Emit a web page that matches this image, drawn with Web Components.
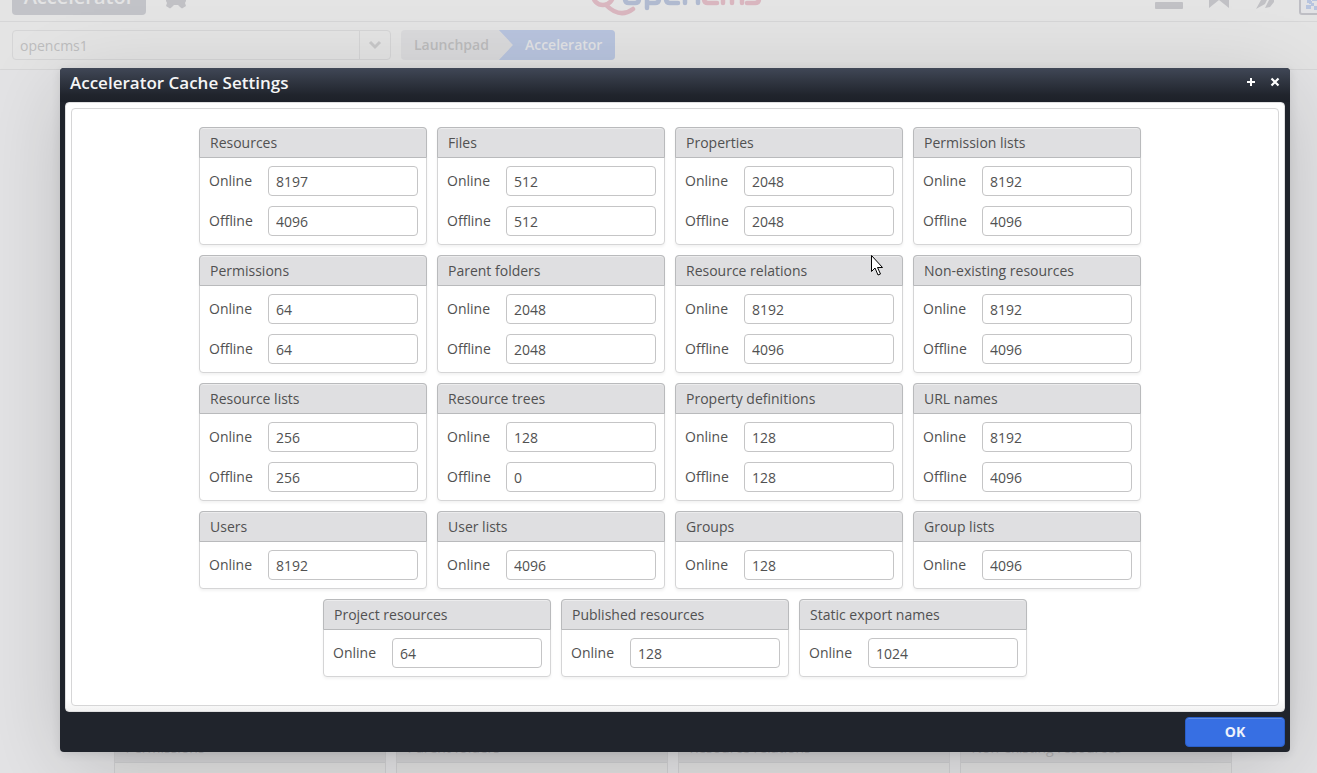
<!DOCTYPE html>
<html lang="en">
<head>
<meta charset="utf-8">
<title>Accelerator Cache Settings</title>
<style>
html, body { height: 100%; }
body { margin: 0; overflow: hidden; background: #e3e3e5; font: 14px/20px "Open Sans", sans-serif; color: #565656; }
</style>
</head>
<body>
<cms-app>
  <cms-header slot="header"></cms-header>
  <cms-toolbar slot="toolbar"></cms-toolbar>
  <cms-tile label="Permissions"></cms-tile>
  <cms-tile label="Parent folders"></cms-tile>
  <cms-tile label="Resource relations"></cms-tile>
  <cms-tile label="Non-existing resources"></cms-tile>
</cms-app>
<cms-dialog label="Accelerator Cache Settings">
  <cache-card label="Resources"><cache-field label="Online" value="8197"></cache-field><cache-field label="Offline" value="4096"></cache-field></cache-card>
  <cache-card label="Files"><cache-field label="Online" value="512"></cache-field><cache-field label="Offline" value="512"></cache-field></cache-card>
  <cache-card label="Properties"><cache-field label="Online" value="2048"></cache-field><cache-field label="Offline" value="2048"></cache-field></cache-card>
  <cache-card label="Permission lists"><cache-field label="Online" value="8192"></cache-field><cache-field label="Offline" value="4096"></cache-field></cache-card>
  <cache-card label="Permissions"><cache-field label="Online" value="64"></cache-field><cache-field label="Offline" value="64"></cache-field></cache-card>
  <cache-card label="Parent folders"><cache-field label="Online" value="2048"></cache-field><cache-field label="Offline" value="2048"></cache-field></cache-card>
  <cache-card label="Resource relations"><cache-field label="Online" value="8192"></cache-field><cache-field label="Offline" value="4096"></cache-field></cache-card>
  <cache-card label="Non-existing resources"><cache-field label="Online" value="8192"></cache-field><cache-field label="Offline" value="4096"></cache-field></cache-card>
  <cache-card label="Resource lists"><cache-field label="Online" value="256"></cache-field><cache-field label="Offline" value="256"></cache-field></cache-card>
  <cache-card label="Resource trees"><cache-field label="Online" value="128"></cache-field><cache-field label="Offline" value="0"></cache-field></cache-card>
  <cache-card label="Property definitions"><cache-field label="Online" value="128"></cache-field><cache-field label="Offline" value="128"></cache-field></cache-card>
  <cache-card label="URL names"><cache-field label="Online" value="8192"></cache-field><cache-field label="Offline" value="4096"></cache-field></cache-card>
  <cache-card label="Users"><cache-field label="Online" value="8192"></cache-field></cache-card>
  <cache-card label="User lists"><cache-field label="Online" value="4096"></cache-field></cache-card>
  <cache-card label="Groups"><cache-field label="Online" value="128"></cache-field></cache-card>
  <cache-card label="Group lists"><cache-field label="Online" value="4096"></cache-field></cache-card>
  <cache-card label="Project resources"><cache-field label="Online" value="64"></cache-field></cache-card>
  <cache-card label="Published resources"><cache-field label="Online" value="128"></cache-field></cache-card>
  <cache-card label="Static export names"><cache-field label="Online" value="1024"></cache-field></cache-card>
</cms-dialog>
<mouse-pointer></mouse-pointer>
<script>
const define = (name, render) => customElements.define(name, class extends HTMLElement {
  connectedCallback() {
    if (!this.shadowRoot) this.attachShadow({ mode: "open" }).innerHTML = render(this);
  }
});

define("cms-app", () => `
<style>
  :host { display: flex; flex-direction: column; height: 100%; overflow: hidden; }
  main { display: flex; flex-wrap: wrap; justify-content: center; gap: 10px; padding: 662px 0 0 28px; }
</style>
<slot name="header"></slot>
<slot name="toolbar"></slot>
<main><slot></slot></main>`);

define("cms-header", () => `
<style>
  :host { display: block; flex: none; background: #e4e4e4; border-bottom: 1px solid #d6d6d7; }
  header { display: grid; grid-template: 21px / 1fr auto 1fr; align-items: end; overflow: hidden; }
  .left, .right { display: flex; align-items: flex-end; }
  .left { padding: 0 0 6px 12px; gap: 18px; }
  .right { justify-content: flex-end; gap: 20px; padding-bottom: 6px; }
  button { padding: 0; border: 0; background: none; display: block; }
  .app { width: 134px; height: 37px; border-radius: 4px; background: #c2c3c8; color: #e3e3e4; font: 600 20px/37px "Open Sans", sans-serif; }
  svg { display: block; }
  .logo { padding: 0 0 5px 37px; }
</style>
<header>
  <div class="left">
    <button class="app">Accelerator</button>
    <button aria-label="Settings"><svg width="24" height="28" viewBox="0 0 24 28"><path fill="#c1c1c5" d="M2 4h20v10l-1 2 1 3-4 2.500-2-1.500-2-2h-4l-2 2-2 1.500-4-2.500 1-3-1-2z"/></svg></button>
  </div>
  <svg class="logo" width="174" height="36" viewBox="0 0 174 36" fill="none" stroke-width="4.5" stroke-linecap="round" stroke-linejoin="round">
    <g stroke="#d9b6bf"><circle cx="13" cy="15" r="10"/><path d="M16 25Q30 39 43 29"/></g>
    <g stroke="#b0bad0"><path d="M35 10v9q0 4 4 4h6q4 0 4-4v-9h-14M57 28V10h12v9q0 4-4 4h-8M88 23h-8q-4 0-4-4v-9h12v7h-12M95 23V10h9q4 0 4 4v9"/></g>
    <g stroke="#d9b6bf"><path d="M127 23h-9q-4 0-4-4v-9h13M133 23V10h19v13M142 23V10M157 23h8q4 0 4-4v-3h-10v-6h10"/></g>
  </svg>
  <div class="right">
    <button aria-label="Menu"><svg width="30" height="22" viewBox="0 0 30 22"><rect x="0" y="9" width="28" height="7" rx="1" fill="#c1c1c5"/></svg></button>
    <button aria-label="Favorites"><svg width="30" height="22" viewBox="0 0 30 22"><path fill="#c1c1c5" d="M4 0h20v15l-10-8-10 8z"/></svg></button>
    <button aria-label="Publish"><svg width="24" height="22" viewBox="0 0 24 22"><path fill="#c1c1c5" d="M5 0h7v7l-2 4-9 5 5-9zM12 0h7v9l-4 5-5 1 4-8z"/></svg></button>
    <button aria-label="User"><svg width="18" height="24" viewBox="0 0 18 24"><path fill="#e2e2e5" stroke="#bebec4" stroke-width="2" d="M20 23H3q-2 0-2-2V0h20"/><path fill="#b7c4df" d="M8 8h4v4H8zM13 5h5v5h-5zM7 14h5v4H7zM12 12h3v3h-3zM15 15h3v4h-3zM10 10h3v3h-3z"/></svg></button>
  </div>
</header>`);

define("cms-toolbar", () => `
<style>
  :host { display: block; flex: none; background: #e4e4e4; border-bottom: 1px solid #d6d6d7; }
  nav { display: flex; gap: 10px; padding: 8px 12px; height: 31px; }
  .combo { display: flex; flex: 0 0 379px; box-sizing: border-box; height: 30px; border: 1px solid #d5d5d6; border-radius: 4px; }
  input { flex: 1; min-width: 0; border: 0; padding: 0 7px; background: none; color: #bdbdbe; font: 14px "Open Sans", sans-serif; }
  .combo button { width: 31px; border: 0; border-left: 1px solid #d5d5d6; padding: 0; background: none; display: grid; place-items: center; }
  .crumbs { display: flex; height: 30px; border-radius: 4px; overflow: hidden; background: #dadadc; font-weight: 600; line-height: 30px; }
  a { text-decoration: none; color: #bcbcbd; padding: 0 10px 0 13px; }
  .here { background: #b8c4de; color: #e2e3e6; padding: 0 13px 0 26px; clip-path: polygon(0 0, 100% 0, 100% 100%, 0 100%, 14px 50%); }
</style>
<nav>
  <div class="combo"><input aria-label="Site" value="opencms1"><button aria-label="Open list"><svg width="14" height="10" viewBox="0 0 14 10"><path d="M2 2l5 5 5-5" fill="none" stroke="#c8c8c9" stroke-width="3"/></svg></button></div>
  <div class="crumbs"><a href="#launchpad">Launchpad</a><a class="here" href="#accelerator">Accelerator</a></div>
</nav>`);

define("cms-tile", el => `
<style>
  :host { display: block; box-sizing: border-box; width: 272px; height: 118px; border: 1px solid #d1d1d3; border-radius: 4px; background: #e1e1e1; }
  h3 { margin: 0; padding: 0 11px; height: 29px; border-bottom: 1px solid #cecfd1; background: #d6d6d8; color: #b9b9bb; font: 14px/30px "Open Sans", sans-serif; }
</style>
<h3>${el.getAttribute("label")}</h3>`);

define("cms-dialog", el => `
<style>
  :host { display: block; position: absolute; top: 68px; left: 60px; right: 27px; background: #20242c; border-radius: 4px; box-shadow: 0 2px 10px rgba(0,0,0,.1), 0 16px 80px -6px rgba(0,0,0,.18); }
  header { display: flex; align-items: center; height: 34px; padding: 0 6px 0 10px; border-radius: 4px 4px 0 0; background: linear-gradient(#404756, #20242c 80%, #1d2129); }
  h2 { flex: 1; margin: 0; padding-bottom: 4px; color: #f5f5f6; font: 600 17px/24px "Open Sans", sans-serif; }
  header button { display: grid; place-items: center; width: 18px; height: 24px; margin: 0 0 6px 6px; padding: 0; border: 0; background: none; }
  section { margin: 0 5px; padding: 5px; border: 1px solid #dfdfe0; border-radius: 4px; background: linear-gradient(#fff 98%, #f2f2f2); }
  .panel { border: 1px solid #d6d6d7; border-radius: 4px; background: #fff; padding: 18px 0; }
  .cards { display: flex; flex-wrap: wrap; justify-content: center; max-width: 1000px; margin: 0 auto; }
  ::slotted(cache-card) { margin: 0 10px 10px 0; }
  ::slotted(cache-card:last-child) { margin-right: 0; }
  footer { display: flex; justify-content: flex-end; padding: 5px; }
  .ok { width: 100px; height: 30px; padding: 0; border: 1px solid #2a5fc9; border-radius: 4px; background: #376fe3; box-shadow: inset 0 1px 0 #618de6; color: #eef2fb; font: 700 14px/28px "Open Sans", sans-serif; }
</style>
<header>
  <h2>${el.getAttribute("label")}</h2>
  <button aria-label="Maximize"><svg width="10" height="10" viewBox="0 0 10 10"><path d="M5 1v8M1 5h8" stroke="#fff" stroke-width="2"/></svg></button>
  <button aria-label="Close"><svg width="10" height="10" viewBox="0 0 10 10"><path d="M1.5 1.5l7 7M8.5 1.5l-7 7" stroke="#fff" stroke-width="2.2"/></svg></button>
</header>
<section><div class="panel"><div class="cards"><slot></slot></div></div></section>
<footer><button class="ok">OK</button></footer>`);

define("cache-card", el => `
<style>
  :host { display: block; box-sizing: border-box; width: 228px; border: 1px solid #d5d5d6; border-radius: 4px; background: #fff; box-shadow: 0 2px 3px rgba(0,0,0,.05); }
  h3 { margin: -1px -1px 0; padding: 0 10px; height: 29px; border: 1px solid #b9babc; border-radius: 4px 4px 0 0; background: #dfdfe1; box-shadow: inset 0 1px 0 #ececed; color: #515151; font: 14px/30px "Open Sans", sans-serif; }
  div { display: grid; grid-template-columns: minmax(0, 1fr); gap: 10px; padding: 8px; }
</style>
<h3>${el.getAttribute("label")}</h3>
<div><slot></slot></div>`);

define("cache-field", el => `
<style>
  :host { display: flex; align-items: center; }
  label { flex: 0 0 60px; padding-left: 1px; box-sizing: border-box; color: #515151; line-height: 28px; }
  input { box-sizing: border-box; flex: 1; min-width: 0; height: 30px; margin: 0; padding: 1px 7px 0; border: 1px solid #c5c5c6; border-radius: 4px; background: #fff; color: #515151; font: 14px "Open Sans", sans-serif; }
</style>
<label for="size">${el.getAttribute("label")}</label>
<input id="size" value="${el.getAttribute("value")}">`);

define("mouse-pointer", () => `
<style>
  :host { position: absolute; left: 871px; top: 255px; pointer-events: none; }
  svg { display: block; }
</style>
<svg width="12" height="21" viewBox="0 0 12 21"><path d="M.5.5v16l3.500-3.500 3 7 2.500-1-3-6.500h5z" fill="#fff" stroke="#000"/></svg>`);
</script>
</body>
</html>
